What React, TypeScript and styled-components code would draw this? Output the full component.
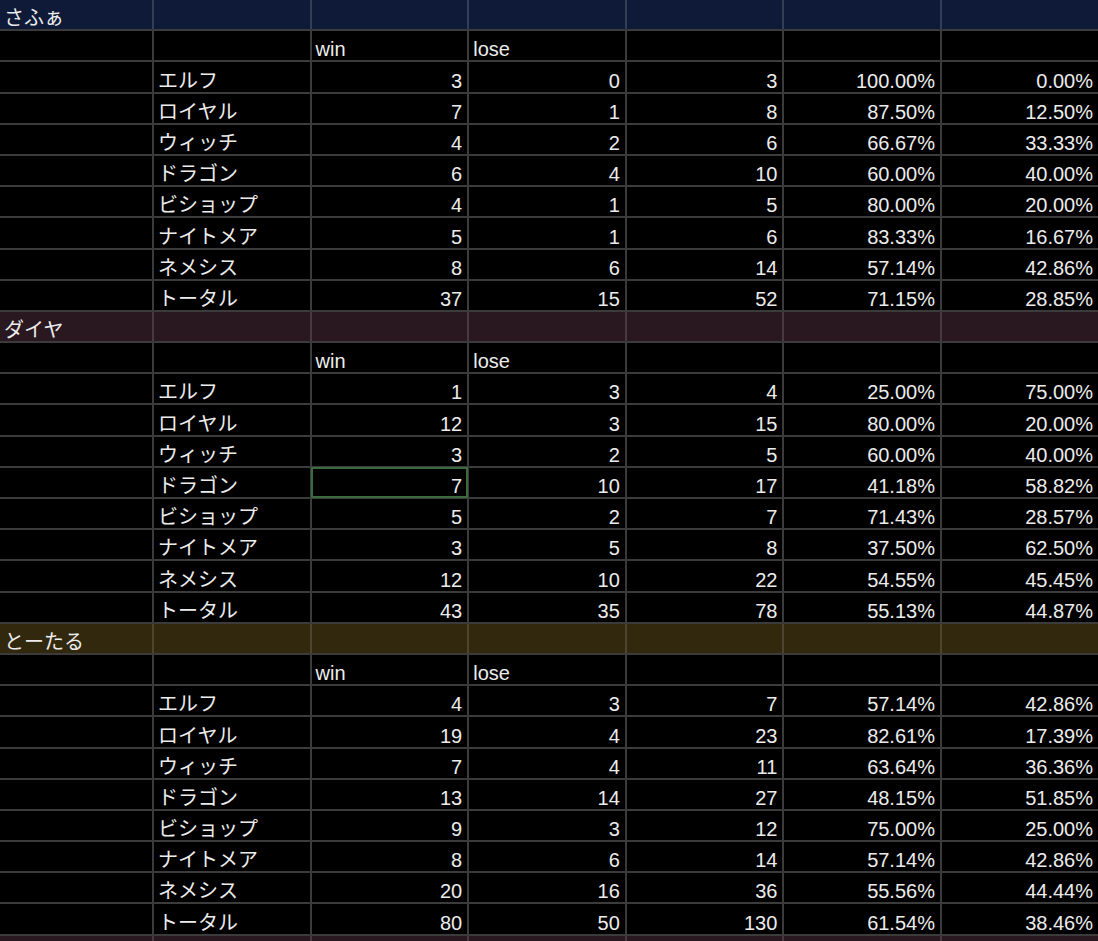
import React from 'react';
import styled, { createGlobalStyle } from 'styled-components';

const GlobalStyle = createGlobalStyle`
  html, body {
    margin: 0;
    padding: 0;
    background: #000000;
    overflow: hidden;
  }
  body {
    font-family: 'Liberation Sans', 'Noto Sans CJK JP', sans-serif;
  }
`;

const Sheet = styled.div`
  display: flex;
  flex-direction: column;
  gap: 2px;
  width: 1098px;
  height: 941px;
  overflow: hidden;
  background: #3b3b3b;
`;

const Row = styled.div<{ $line: string }>`
  display: grid;
  grid-template-columns: 152px repeat(5, 155.6px) 1fr;
  column-gap: 2px;
  background: ${p => p.$line};
  flex: 0 0 29.2px;
`;

const Cell = styled.div<{ $bg: string; $right?: boolean; $selected?: boolean }>`
  position: relative;
  display: flex;
  align-items: flex-end;
  justify-content: ${p => (p.$right ? 'flex-end' : 'flex-start')};
  padding: 0 5px 1px 4px;
  background: ${p => p.$bg};
  color: #ececec;
  font-size: 20px;
  line-height: 20px;
  white-space: nowrap;
  overflow: hidden;
  ${p => p.$selected && `
    z-index: 1;
    overflow: visible;
    box-shadow: 0 0 0 1px #3b6a3f, inset 0 0 0 1px #3b6a3f;
  `}
`;

type Band = { title: string; bg: string; line: string; rows: [string, number, number][] };

const bands: Band[] = [
  {
    title: 'さふぁ',
    bg: '#0e1a37',
    line: '#323d58',
    rows: [
      ['エルフ', 3, 0],
      ['ロイヤル', 7, 1],
      ['ウィッチ', 4, 2],
      ['ドラゴン', 6, 4],
      ['ビショップ', 4, 1],
      ['ナイトメア', 5, 1],
      ['ネメシス', 8, 6],
      ['トータル', 37, 15],
    ],
  },
  {
    title: 'ダイヤ',
    bg: '#2a1820',
    line: '#493a41',
    rows: [
      ['エルフ', 1, 3],
      ['ロイヤル', 12, 3],
      ['ウィッチ', 3, 2],
      ['ドラゴン', 7, 10],
      ['ビショップ', 5, 2],
      ['ナイトメア', 3, 5],
      ['ネメシス', 12, 10],
      ['トータル', 43, 35],
    ],
  },
  {
    title: 'とーたる',
    bg: '#32280d',
    line: '#4e4530',
    rows: [
      ['エルフ', 4, 3],
      ['ロイヤル', 19, 4],
      ['ウィッチ', 7, 4],
      ['ドラゴン', 13, 14],
      ['ビショップ', 9, 3],
      ['ナイトメア', 8, 6],
      ['ネメシス', 20, 16],
      ['トータル', 80, 50],
    ],
  },
];

const BLACK = '#000000';
const LINE = '#3b3b3b';
const pct = (a: number, t: number) => `${((a / t) * 100).toFixed(2)}%`;

const App: React.FC = () => {
  return (
    <>
      <GlobalStyle />
      <Sheet>
        {bands.map((band, bi) => (
          <React.Fragment key={band.title}>
            <Row $line={band.line}>
              <Cell $bg={band.bg}>{band.title}</Cell>
              {Array.from({ length: 6 }).map((_, i) => (
                <Cell key={i} $bg={band.bg} />
              ))}
            </Row>
            <Row $line={LINE}>
              <Cell $bg={BLACK} />
              <Cell $bg={BLACK} />
              <Cell $bg={BLACK}>win</Cell>
              <Cell $bg={BLACK}>lose</Cell>
              <Cell $bg={BLACK} />
              <Cell $bg={BLACK} />
              <Cell $bg={BLACK} />
            </Row>
            {band.rows.map(([name, win, lose]) => {
              const total = win + lose;
              return (
                <Row key={name} $line={LINE}>
                  <Cell $bg={BLACK} />
                  <Cell $bg={BLACK}>{name}</Cell>
                  <Cell $bg={BLACK} $right $selected={bi === 1 && name === 'ドラゴン'}>
                    {win}
                  </Cell>
                  <Cell $bg={BLACK} $right>{lose}</Cell>
                  <Cell $bg={BLACK} $right>{total}</Cell>
                  <Cell $bg={BLACK} $right>{pct(win, total)}</Cell>
                  <Cell $bg={BLACK} $right>{pct(lose, total)}</Cell>
                </Row>
              );
            })}
          </React.Fragment>
        ))}
        <Row $line="#493a41">
          {Array.from({ length: 7 }).map((_, i) => (
            <Cell key={i} $bg="#2a1820" />
          ))}
        </Row>
      </Sheet>
    </>
  );
};

export default App;
